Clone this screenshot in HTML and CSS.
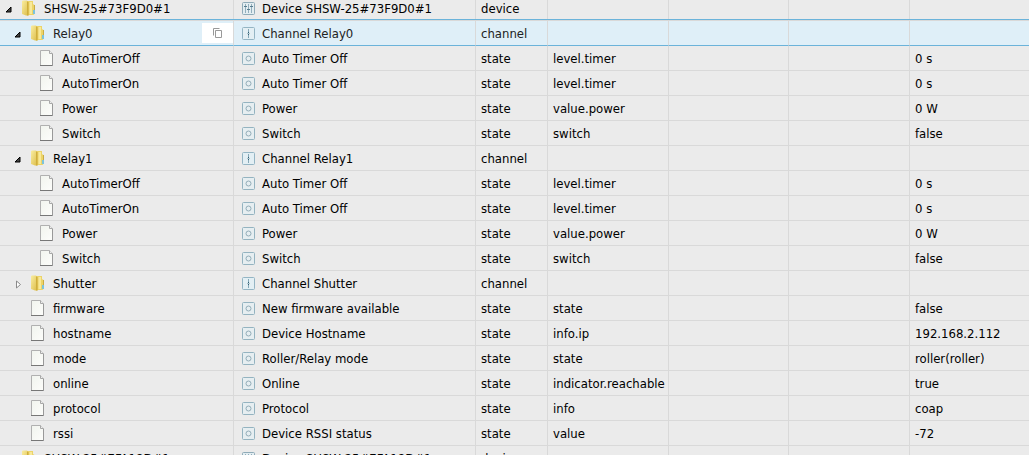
FILE: index.html
```html
<!DOCTYPE html>
<html lang="en">
  <head>
    <meta charset="UTF-8" />
    <meta name="viewport" content="width=device-width, initial-scale=1.0" />
    <title>Objects</title>
    <link rel="stylesheet" href="styles.css">
  </head>
  <body>
    <!-- icon set -->
    <svg class="sprite" aria-hidden="true">
      <defs>
        <linearGradient id="gold" x1="0" y1="0" x2="1" y2="1">
          <stop offset="0" stop-color="#f9eda0" />
          <stop offset="1" stop-color="#dcbc48" />
        </linearGradient>
        <linearGradient id="paper" x1="0" y1="0" x2="1" y2="1">
          <stop offset="0" stop-color="#f1f4ee" />
          <stop offset="1" stop-color="#fdfdfb" />
        </linearGradient>
      </defs>
      <symbol id="icon-folder" viewBox="0 0 13 16">
        <path d="M5 1.5 6 1h5v3l1.5 1v9l-1 1H5z" fill="#ecd468" />
        <path d="M7.5 2h2.5v12H7.5z" fill="#f8e99a" />
        <path d="M0 1 1 .5h4l1.5 2v13L4 15.5 0 14z" fill="url(#gold)" />
        <path d="M5 1l1.5 1.5v13L5 15.5z" fill="#cfae3c" />
        <path d="M11 10h2v4h-2z" fill="#7cc3dc" />
        <path d="M12.5 5v5" stroke="#c9ab45" fill="none" />
      </symbol>
      <symbol id="icon-file" viewBox="0 0 13 16">
        <path d="M.5.5h9l3 3v12H.5z" fill="url(#paper)" stroke="#b0b0b0" />
        <path d="M9.5.5v3h3" fill="#eee" stroke="#a8a8a8" />
        <path d="M0 15.5h13" stroke="#777" fill="none" />
        <path d="M12.5 4v12" stroke="#999" fill="none" />
      </symbol>
      <symbol id="icon-device" viewBox="0 0 13 13">
        <rect x=".5" y=".5" width="12" height="12" rx="1" fill="#e3edf1" stroke="#8fabb8" />
        <path d="M3.5 2v9M6.5 2v9M9.5 2v9" stroke="#91aebc" />
        <path d="M2 4.5h3M5 7.5h3M8 4.5h3" stroke="#577c8e" />
      </symbol>
      <symbol id="icon-channel" viewBox="0 0 13 13">
        <rect x=".5" y=".5" width="12" height="12" rx="1" fill="#e3eff4" stroke="#94b5c4" />
        <path d="M6.5 2v9" stroke="#86a9b8" />
        <path d="M6.5 5v3" stroke="#315f74" />
        <path d="M5 6.5h3" stroke="#a9c1cb" />
      </symbol>
      <symbol id="icon-state" viewBox="0 0 13 13">
        <rect x=".5" y=".5" width="12" height="12" rx="1" fill="#e6eef1" stroke="#94b3c0" />
        <circle cx="6.5" cy="6.5" r="2.5" fill="none" stroke="#91acb8" />
      </symbol>
      <symbol id="icon-open" viewBox="0 0 7 7">
        <path d="M6 1v5H1z" fill="#444" stroke="#000" />
      </symbol>
      <symbol id="icon-closed" viewBox="0 0 7 9">
        <path d="M1.5 1v7l4-3.5z" fill="#fff" stroke="#8a8a8a" />
      </symbol>
      <symbol id="icon-copy" viewBox="0 0 9 10">
        <path d="M.5 7.5v-7h6M2.5 2.5h6v7h-6z" fill="none" stroke="#999" />
      </symbol>
    </svg>

    <main class="tree">
      <table class="objects">
        <colgroup>
          <col class="col-id" />
          <col class="col-name" />
          <col class="col-type" />
          <col class="col-role" />
          <col class="col-room" />
          <col class="col-function" />
          <col />
        </colgroup>
        <tbody id="rows"></tbody>
      </table>
    </main>

    <script>
      // level, id, name, type, role, value, open/closed
      const objects = [
        [0, "SHSW-25#73F9D0#1", "Device SHSW-25#73F9D0#1", "device", "", "", "open"],
        [1, "Relay0", "Channel Relay0", "channel", "", "", "open"],
        [2, "AutoTimerOff", "Auto Timer Off", "state", "level.timer", "0 s"],
        [2, "AutoTimerOn", "Auto Timer Off", "state", "level.timer", "0 s"],
        [2, "Power", "Power", "state", "value.power", "0 W"],
        [2, "Switch", "Switch", "state", "switch", "false"],
        [1, "Relay1", "Channel Relay1", "channel", "", "", "open"],
        [2, "AutoTimerOff", "Auto Timer Off", "state", "level.timer", "0 s"],
        [2, "AutoTimerOn", "Auto Timer Off", "state", "level.timer", "0 s"],
        [2, "Power", "Power", "state", "value.power", "0 W"],
        [2, "Switch", "Switch", "state", "switch", "false"],
        [1, "Shutter", "Channel Shutter", "channel", "", "", "closed"],
        [1, "firmware", "New firmware available", "state", "state", "false"],
        [1, "hostname", "Device Hostname", "state", "info.ip", "192.168.2.112"],
        [1, "mode", "Roller/Relay mode", "state", "state", "roller(roller)"],
        [1, "online", "Online", "state", "indicator.reachable", "true"],
        [1, "protocol", "Protocol", "state", "info", "coap"],
        [1, "rssi", "Device RSSI status", "state", "value", "-72"],
        [0, "SHSW-25#7FA18D#1", "Device SHSW-25#7FA18D#1", "device", "", "", "open"],
      ];
      const selected = 1;

      function icon(name) {
        return `<svg class="icon-${name}" aria-hidden="true"><use href="#icon-${name}"></use></svg>`;
      }

      document.querySelector("#rows").innerHTML = objects
        .map(([level, id, name, type, role, value, toggle], i) => {
          const expander = toggle
            ? `<button class="toggle" aria-label="Toggle ${id}">${icon(toggle)}</button>`
            : `<span class="toggle"></span>`;
          const copy = i === selected
            ? `<button class="copy" aria-label="Copy ${id}">${icon("copy")}</button>`
            : "";
          return `<tr class="${i === selected ? "selected" : ""}">
            <td><div class="node level-${level}">${expander}${icon(toggle ? "folder" : "file")}<span class="id">${id}</span>${copy}</div></td>
            <td><div class="name">${icon(type)}<span>${name}</span></div></td>
            <td>${type}</td>
            <td>${role}</td>
            <td></td>
            <td></td>
            <td>${value}</td>
          </tr>`;
        })
        .join("");
    </script>
  </body>
</html>
```
FILE: styles.css
```css
body {
  margin: 0;
  background-color: #ebebeb;
  color: #000;
  font-family: Tahoma, "DejaVu Sans Condensed", "DejaVu Sans", sans-serif;
  font-stretch: condensed;
  font-size: 13px;
  line-height: 22px;
}
.sprite {
  position: absolute;
  width: 0;
  height: 0;
}
.tree {
  height: 100vh;
  overflow: hidden;
}
/* the list is scrolled a few pixels down */
.objects {
  width: 100%;
  margin-top: -4px;
  table-layout: fixed;
  border-spacing: 0;
}
.col-id {
  width: 234px;
}
.col-name {
  width: 242px;
}
.col-type {
  width: 72px;
}
.col-role,
.col-function {
  width: 121px;
}
.col-room {
  width: 120px;
}
td {
  height: 22px;
  padding: 2px 5px 0;
  border-right: 1px solid #d9d9d9;
  border-bottom: 1px solid #d9d9d9;
  white-space: nowrap;
}
td:first-child {
  padding: 2px 0 0;
}
td:last-child {
  border-right: none;
}
.selected td {
  background-color: #dfeff8;
  color: #222;
  border-bottom-color: #6bb3da;
  box-shadow: 0 -1px 0 #d9d9d9, 0 -2px 0 #6bb3da;
}
.node,
.name {
  display: flex;
  align-items: center;
  height: 22px;
}
.node {
  padding-left: 5px;
}
.level-1 {
  padding-left: 14px;
}
.level-2 {
  padding-left: 23px;
}
.name {
  gap: 7px;
  padding-left: 3px;
}
button {
  padding: 0;
  border: none;
  background: none;
  cursor: pointer;
}
.toggle {
  display: flex;
  align-items: center;
  width: 17px;
  height: 16px;
}
.id {
  flex: 1;
  margin-left: 9px;
}
.copy {
  display: flex;
  align-items: center;
  justify-content: center;
  width: 31px;
  height: 20px;
  margin-bottom: 2px;
  background-color: #fff;
}
svg {
  flex: none;
}
.icon-folder,
.icon-file {
  width: 13px;
  height: 16px;
  margin-bottom: 2px;
}
.icon-device,
.icon-channel,
.icon-state {
  width: 13px;
  height: 13px;
  margin-bottom: 2px;
}
.icon-open {
  width: 7px;
  height: 7px;
}
.icon-closed {
  width: 7px;
  height: 9px;
  margin-left: 1px;
}
.icon-copy {
  width: 9px;
  height: 10px;
}
```
